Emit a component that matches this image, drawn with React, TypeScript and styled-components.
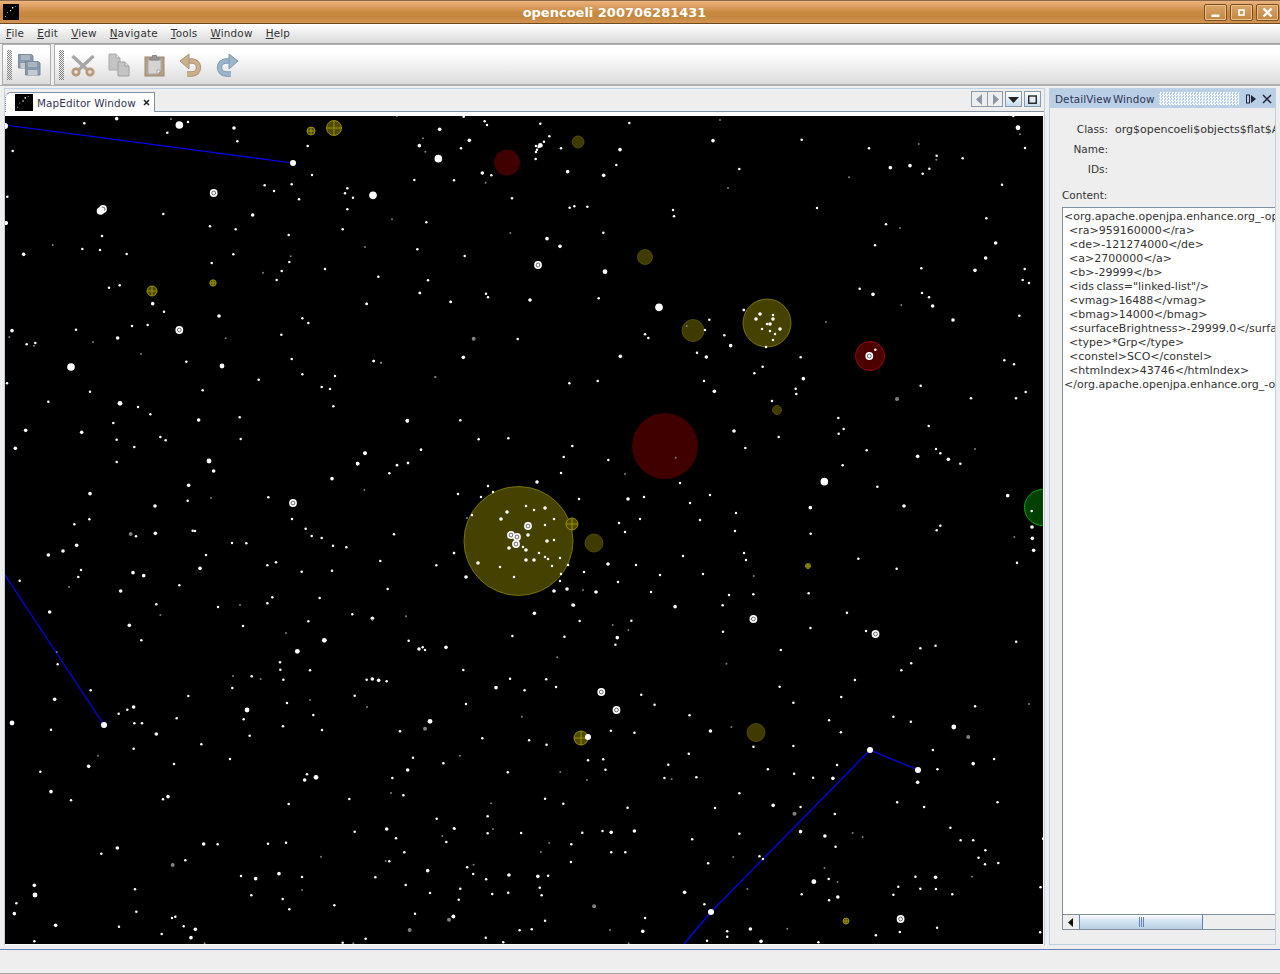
import styled, { createGlobalStyle } from "styled-components";

const GlobalStyle = createGlobalStyle`
    html, body {
        margin: 0;
        padding: 0;
        background: #eeeeee;
    }
    * {
        box-sizing: border-box;
    }
`;

const uiFont = `"DejaVu Sans", "Liberation Sans", sans-serif`;

const Root = styled.div`
    width: 1280px;
    height: 974px;
    display: flex;
    flex-direction: column;
    overflow: hidden;
    font-family: ${uiFont};
    font-size: 11px;
    color: #333333;
    background: #eeeeee;
`;

/* ---- window frame ---- */

const TitleBar = styled.header`
    height: 24px;
    flex: none;
    display: flex;
    align-items: center;
    padding: 0 1px 0 3px;
    border-top: 1px solid #8a6a48;
    border-bottom: 1px solid #6f4a1e;
    background: linear-gradient(#eab27a 0%, #dc9f62 25%, #c98a42 50%, #c4853c 70%, #d29452 100%);
`;

const TitleText = styled.div`
    flex: 1;
    padding-left: 6px;
    text-align: center;
    color: #ffffff;
    font-size: 13px;
    font-weight: bold;
`;

const WinButtons = styled.div`
    display: flex;
    gap: 3px;
`;

const WinButton = styled.div`
    width: 23px;
    height: 17px;
    display: flex;
    align-items: center;
    justify-content: center;
    border: 1px solid #7a4f22;
    border-radius: 2px;
    box-shadow: inset 0 0 0 1px #eec08e;
    background: linear-gradient(#dba66c, #c38541);
`;

const MenuBar = styled.nav`
    height: 20px;
    flex: none;
    display: flex;
    align-items: center;
    gap: 13px;
    padding: 0 0 2px 6px;
    border-bottom: 1px solid #a3a3a3;
    background: linear-gradient(#ffffff, #dadada);
`;

const MenuItem = styled.span`
    font-size: 10.4px;
    letter-spacing: 0.2px;
    u {
        text-underline-offset: 1px;
    }
`;

const ToolRow = styled.div`
    height: 42px;
    flex: none;
    display: flex;
    gap: 3px;
    padding-left: 2px;
    border-bottom: 1px solid #b0b0b0;
    background: #eeeeee;
`;

const ToolBar = styled.div<{ $grow?: boolean }>`
    display: flex;
    align-items: center;
    flex: ${(p) => (p.$grow ? 1 : "none")};
    width: ${(p) => (p.$grow ? "auto" : "49px")};
    gap: 12px;
    padding-left: 4px;
    border: 1px solid #aeaeae;
    border-right: ${(p) => (p.$grow ? "none" : "1px solid #aeaeae")};
    background: linear-gradient(#ffffff 20%, #dcdcdc);
`;

const Grip = styled.div<{ $after: number }>`
    width: 5px;
    height: 30px;
    margin-right: ${(p) => p.$after - 12}px;
    background-image: repeating-conic-gradient(#808080 0 25%, transparent 0 50%);
    background-size: 2px 2px;
`;

const ToolSlot = styled.div`
    width: 24px;
    height: 24px;
    flex: none;
    svg {
        display: block;
    }
`;

/* ---- docking area ---- */

const Workspace = styled.main`
    flex: 1;
    min-height: 0;
    display: flex;
    gap: 4px;
    padding: 2px 4px 4px 4px;
`;

const EditorFrame = styled.section`
    width: 1041px;
    flex: none;
    display: flex;
    flex-direction: column;
    border: 1px solid #bdd0e4;
    border-bottom: none;
`;

const TabStrip = styled.div`
    height: 22px;
    flex: none;
    display: flex;
    align-items: flex-end;
    justify-content: space-between;
    padding-right: 3px;
    background: #eeeeee;
`;

const Tab = styled.div`
    position: relative;
    z-index: 1;
    width: 150px;
    height: 20px;
    margin-bottom: -1px;
    display: flex;
    align-items: center;
    padding-left: 9px;
    border: 1px solid #7f8fa0;
    border-bottom: none;
    border-left: 1px dotted #7f8fa0;
    border-top-left-radius: 6px;
    background: #ffffff;
`;

const TabLabel = styled.span`
    margin-left: 4px;
    font-size: 10.4px;
    letter-spacing: 0.12px;
    white-space: nowrap;
    color: #333355;
`;

const TabClose = styled.span`
    margin-left: 7px;
    display: flex;
`;

const AppIconBox = styled.div<{ $w: number; $h: number }>`
    width: ${(p) => p.$w}px;
    height: ${(p) => p.$h}px;
    flex: none;
    background: #000000;
    svg {
        display: block;
    }
`;

const TabControls = styled.div`
    display: flex;
    gap: 2px;
    align-self: flex-start;
    margin-top: 2px;
`;

const ControlGroup = styled.div`
    display: flex;
    border: 1px solid #8c9aa8;
    background: #eeeeee;
`;

const ControlCell = styled.div<{ $raised?: boolean }>`
    width: 15px;
    height: 14px;
    display: flex;
    align-items: center;
    justify-content: center;
    background: ${(p) => (p.$raised ? "linear-gradient(#ffffff, #c9dcf0)" : "#eeeeee")};
    & + & {
        border-left: 1px solid #8c9aa8;
    }
`;

const TabBody = styled.div`
    flex: 1;
    min-height: 0;
    padding-top: 4px;
    border-top: 1px solid #7f8fa0;
    background: #ffffff;
`;

const MapSvg = styled.svg`
    display: block;
    width: 1038px;
    height: 828px;
    background: #000000;
`;

/* ---- detail panel ---- */

const DetailPanel = styled.aside`
    flex: 1;
    min-width: 0;
    display: flex;
    flex-direction: column;
    border: 1px solid #bdd0e4;
    overflow: hidden;
`;

const PanelHeader = styled.div`
    height: 19px;
    flex: none;
    display: flex;
    align-items: center;
    padding: 0 3px 0 5px;
    background: #b8cfe5;
    color: #333355;
`;

const PanelTitle = styled.span`
    flex: none;
    font-size: 10.4px;
    letter-spacing: 0.12px;
    white-space: nowrap;
    word-spacing: -2px;
`;

const Dither = styled.div`
    flex: 1;
    height: 13px;
    margin: 0 7px 0 4px;
    background-image: repeating-conic-gradient(#f4f8fc 0 25%, transparent 0 50%);
    background-size: 3px 3px;
`;

const PanelIcons = styled.div`
    display: flex;
    flex: none;
    gap: 6px;
`;

const PanelBody = styled.div`
    flex: 1;
    min-height: 0;
    display: flex;
    flex-direction: column;
    padding: 15px 0 14px 12px;
`;

const FieldGrid = styled.div`
    display: grid;
    grid-template-columns: 46px 1fr;
    column-gap: 7px;
    grid-auto-rows: 20px;
`;

const FieldLabel = styled.span`
    font-size: 10.5px;
    text-align: right;
`;

const FieldValue = styled.span`
    white-space: nowrap;
    overflow: hidden;
`;

const ContentLabel = styled.div`
    margin-top: 6px;
    height: 18px;
    font-size: 10.5px;
`;

const TextArea = styled.div`
    flex: 1;
    min-height: 0;
    display: flex;
    flex-direction: column;
    border-left: 1px solid #7f8fa0;
    border-top: 1px solid #7f8fa0;
    background: #ffffff;
`;

const TextContent = styled.pre`
    flex: 1;
    min-height: 0;
    margin: 0;
    padding: 2px 0 0 1px;
    overflow: hidden;
    font-family: ${uiFont};
    font-size: 11px;
    line-height: 14px;
    color: #333333;
    word-spacing: -1px;
`;

const HScroll = styled.div`
    height: 16px;
    flex: none;
    display: flex;
    border-top: 1px solid #7f8fa0;
    border-bottom: 1px solid #7f8fa0;
    background: #eeeeee;
`;

const ScrollArrow = styled.div`
    width: 16px;
    display: flex;
    align-items: center;
    justify-content: center;
    background: #eeeeee;
`;

const ScrollThumb = styled.div`
    width: 124px;
    display: flex;
    align-items: center;
    justify-content: center;
    gap: 1px;
    border-left: 1px solid #6382bf;
    border-right: 1px solid #6382bf;
    background: linear-gradient(#ffffff, #d6e4f2 40%, #b8cfe5);
`;

const ThumbLine = styled.i`
    width: 1px;
    height: 10px;
    background: #6382bf;
`;

const StatusBar = styled.footer`
    height: 25px;
    flex: none;
    border-top: 1px solid #6382bf;
    border-bottom: 1px solid #a8a8a8;
    background: #eeeeee;
`;

/* ---- star data, copied per map region: x,y[,kind]  d=dim D=dim blob m=mid l=large b=big ---- */

const REGIONS = [
    { ox: 0, oy: 110, sx: 3, sy: 3, pts: `350,26,m 253,40 513,27,d 538,45,b 564,36 502,68 702,54,m 712,94 923,108 38,123 936,195 794,226 875,223 822,243 1042,235 1035,250 897,268 1042,298 22,260 18,339,m 490,312 758,315,m 630,349 707,358 866,375 1028,358 306,378 158,405,d 247,417 300,420 380,432 71,433,m 700,433 872,439,d 635,459 868,456 975,477 845,483 789,488,d 830,510 327,533 359,526` },
    { ox: 5, oy: 290, sx: 3, sy: 3, pts: `443,41,m 477,65 642,78,m 381,108 428,105 213,119 21,122,m 338,144,m 13,141,d 65,163 91,159 87,167,d 264,156,d 198,231,b 408,192,d 544,215 651,228,l 662,145,d 6,280 255,305 593,301 761,269 130,335 345,340,l 399,351 436,373 325,399 581,390,m 704,382 62,421,m 230,427,m 335,449 466,441 482,451 707,447 388,471 31,475,m 335,516 612,513,l 626,543,m 551,586,m 255,611,m 548,632 618,624,d 450,648,m 253,688 208,703 377,732,D 393,739 451,730,m 563,722 570,723 681,759 724,760 215,766,m 174,783,m 130,795,m 603,795 585,835,m 228,840 220,861 192,891,d 384,848,m 416,857,m 44,872 347,903,m 523,886 134,966,m 454,943 466,975,d 639,951 705,945,d 787,940 802,922 944,924 1042,973 1102,985,m 1203,979,d 1245,9 1337,36 1085,42 892,85 910,99 829,134 860,207 892,253 990,258 950,291 975,297 985,349 1106,213 1128,218,d 1291,261,d 1207,393,m 1080,490,m 1058,521,m 1248,479 1176,526 1209,519 1153,550 981,566,m 1078,600,d 790,622 861,687 902,716 920,738 950,744 984,767 1024,772 1167,733 1126,813 1294,826 1347,789 787,826 813,817 890,845 981,842 1148,897` },
    { ox: 5, oy: 620, sx: 3, sy: 3, pts: `373,16,m 409,61 714,18 910,4 1102,0,d 843,39,d 958,61,l 877,94,l 1211,62 1242,87,m 1253,82 1260,90 1323,82,m 155,96,d 158,133 825,127 826,149 915,151 684,168,d 740,169 767,177,d 835,179 1085,179 1102,177,m 1121,181,m 1145,184 257,211 682,204 550,228 149,238,m 846,249 915,240,d 1049,227 1086,261,d 386,261,m 367,269 341,281 726,270,l 925,285 515,295 716,298 388,310 411,310 21,309,l 138,329 834,319 951,330 1185,334 1275,304,l 1260,326,D 454,342,m 734,347 589,373 386,386 279,407,d 675,417 1224,413 1315,430 507,432 251,439,m 106,455 1208,450,m 906,463 933,472,l 899,480,m 1162,474 138,515,m 1158,519,d 1195,526 198,541 489,530,m 474,538 1033,537 851,552 1295,596 1145,627,m 1049,635 1347,625 1312,648,d 1173,655 1324,666 596,672,m 638,673 789,671 843,668 337,684,m 289,701 1198,697 948,710,d 1142,723,d 1153,724 541,721 503,735,D 708,768 752,776,m 822,761,m 891,771 1111,772 1268,752,m 88,796,m 90,825,l 390,808 1202,795 891,810,d 739,826 833,837 1275,819 34,850 988,856 853,868 28,881,m 394,875 1230,881 511,890 501,894 1345,889,m 1332,899,D 152,916,m 342,920 536,919 571,928,m 1214,930,D 470,942 558,953,m 88,964 1082,956 1013,968 599,970,d 1045,970,d` },
    { ox: 350, oy: 116, sx: 3, sy: 3, pts: `341,2 141,0,d 404,16 411,27 571,23 269,40,m 219,67,d 358,73,m 208,89,m 333,97 226,107,d 265,128,b 571,88,l 582,77 598,61 558,90 566,93 561,101 558,108 557,129 633,97 397,171,m 424,178 407,200,d 312,193 193,192 653,167,m 810,101,m 799,147 761,178,m 838,21 1110,12,d 1089,74,m 1168,159 1134,216,d 9,245 69,238,b 486,247 659,275 673,271 712,272 969,282 972,301 126,310,d 229,319 481,351,d 760,350 591,368,m 630,391,m 202,400 45,393,d 344,420 765,467,l 85,482 234,493 408,533 414,544 209,531 540,552,m 746,547 50,563 302,557 927,574,b 1181,582 1078,611 1010,630,d 1065,642 885,655 895,666 1123,658 1142,689,m 371,668,D 503,669 340,724,m 811,721,m 1041,710 1069,723,m 71,735 93,740,d 256,783,d 743,795 658,802 1062,795 1093,826,m 172,914,m 331,913 1152,945,m 386,970 475,967 667,990 1186,996 213,1001 45,1011,m 641,1023 775,1032 977,1025,d 174,1041 141,1047 23,1043,m` },
    { ox: 750, oy: 116, sx: 3, sy: 3, pts: `155,71 357,97 506,84,d 560,119 559,131,d 638,127 421,155,m 480,149,m 538,158 518,173 297,184,d 756,206 810,55,d 825,96 804,35,l 790,0 201,276 709,307 408,325 450,336,d 375,388 737,381,m 707,426,m 514,457 675,463,m 824,459 818,492 837,501 329,518 369,535,m 516,531 537,544 454,567,d 548,570,m 808,599 609,612,m 228,618,d 152,724 376,701 763,733 792,745 38,752 13,772 160,788,m 137,818 139,834 512,809 441,849,D 663,847 798,847 827,828 66,855 265,906 536,930 281,939 266,953 86,963 350,1003 558,999 571,1012 503,1021,m 595,1030,m 675,999,d 631,1043 278,1048 223,1097,b 382,1112 773,1139,m 181,1175,m 462,1170,m 845,1185 846,1233,m 847,1267,m 851,1303,m 571,1229 560,1243 793,1263,d 182,1253 325,1328 801,1340 440,1358 11,1380,d 10,1435 176,1432` },
    { ox: 450, oy: 600, sx: 2.63, sy: 3, pts: `222,40,m 326,16 592,20,m 717,16 341,63 428,75,d 477,62 469,90,d 1044,38 948,84 718,95 1094,93 164,108 301,110 440,113,m 435,134 870,150 1237,145 1277,137 1489,125 282,172,d 727,191,d 1213,190 1187,211 35,210 158,236 253,238 1065,240 121,263,m 196,271 279,261 867,260 503,284 1029,291 42,312 538,314 903,308 1381,319 1523,312,d 630,346 189,350,d 997,361 1166,350 1212,365 1325,381,l 685,393,m 740,381,d 423,392 485,398 1028,397 1363,411,D 85,415 208,421 254,434 798,440 903,438 1270,450 628,461 26,467,d 363,481 403,478 409,509 574,494 1018,495 1431,477 1376,491,m 1282,508 152,517 290,516,d 360,540,d 564,534 583,537,d 648,532 836,508 905,521 955,533 1007,535,m 1230,547,m 761,580 250,596 108,610,d 298,611 467,623 697,624 850,616,m 922,621 906,641,D 1012,642 1176,607 1247,621 1440,607 99,649 12,686 113,687,d 99,700 187,699 348,698 401,693 424,697,m 485,693,m 761,701 922,695,m 986,708,m 1059,699,d 1085,711,d 1316,683 1343,721 1376,721 1560,716 637,718 261,729,d 319,733 1014,740 1408,751 239,756,d 424,757 461,757 745,771,d 814,769 823,777 1390,773 679,790 318,786 62,794,d 45,802 1407,793 1442,789 985,804,d 61,822 95,838 155,825,m 231,829,m 258,827 1224,830 1277,832,m 1373,830,d 996,837 957,845,l 1019,846,d 236,863 27,866 1179,860 1237,866 1278,867 782,867,d 111,882 153,878 241,886 617,877,m 925,883 1166,884 1321,883 1020,891,m 1553,862 23,899 997,901 669,913 379,919,D 9,950,m 513,954 250,962 183,991 215,988 421,990,d 507,994,m 729,994 790,987,m 887,986,d 1281,983 1183,996 1120,1006 1552,997 94,1013 729,1010 676,1022 818,1024,m 969,1027 140,1027 470,1030,d` },
    { ox: 0, oy: 0, sx: 1, sy: 1, pts: `537,482,m 561,473 488,486 458,494 481,497 493,492 579,499 526,506 534,510 545,508,m 507,512,m 472,515 467,518,d 501,519,m 554,519 545,525 619,523 528,535,m 547,541,m 554,540 509,548,m 523,547 526,550,m 539,553 454,553 545,557 548,559 526,560,m 534,560,m 560,558 478,563,m 500,567 552,566 568,565 608,564,m 466,577,m 514,577 584,572 561,574 560,581 618,582 554,591,m 567,589,m 583,590,d 596,592,m 573,605,m 628,499,m 644,497 690,503 625,474,d 640,519 625,532 683,556 636,565 660,575 651,592 729,595 744,553 746,560 703,574 736,513 700,520 680,483 710,495 735,531 744,310 760,314,m 756,319,m 773,315 773,319,m 770,324,m 767,324 762,329 770,331 780,329,m 775,334 773,340 766,347` },
];

const RADIUS: Record<string, number> = { n: 1.25, m: 1.8, l: 2.4, b: 3.8, d: 1, D: 2 };

const stars = REGIONS.flatMap((r) =>
    r.pts.split(" ").map((p) => {
        const [x, y, kind = "n"] = p.split(",");
        return {
            cx: r.ox + Number(x) / r.sx,
            cy: r.oy + Number(y) / r.sy,
            kind,
        };
    })
);

const RINGS = [
    [213.7, 193], [179.3, 330], [293, 503], [538, 265], [753.4, 619], [875.5, 634],
    [601.3, 692], [616.5, 710], [528, 526], [511, 535], [517, 537], [516, 544],
    [869.3, 356], [900.6, 919], [103, 209],
];

const NODES = [
    [5, 126, 3], [293, 163, 3], [104, 725, 3], [870, 750, 3], [918, 770, 3],
    [711, 912, 3], [100.5, 211, 3.8], [588, 737, 3], [6, 223, 2],
];

const LINES = [
    [[5, 125], [293, 163]],
    [[5, 575], [104, 725]],
    [[684, 944], [711, 912], [870, 750], [918, 770]],
];

const OLIVE = [
    { x: 518.5, y: 541, r: 54.5 },
    { x: 767, y: 323, r: 24 },
    { x: 693, y: 330.5, r: 11 },
    { x: 645, y: 257, r: 7.5 },
    { x: 578, y: 142, r: 6 },
    { x: 777, y: 410, r: 4.5 },
    { x: 594, y: 543, r: 9 },
    { x: 756, y: 732.5, r: 9 },
];

const CROSSED = [
    { x: 334, y: 128, r: 7.5 },
    { x: 311, y: 131, r: 4 },
    { x: 152, y: 291, r: 5 },
    { x: 213, y: 283, r: 3.2 },
    { x: 572, y: 524, r: 6 },
    { x: 581, y: 738, r: 7 },
    { x: 808, y: 566, r: 2.5 },
    { x: 846, y: 921, r: 3 },
];

const DETAIL_XML = `<org.apache.openjpa.enhance.org_-opencoeli-objects-flat-AbstractObject>
  <ra>959160000</ra>
  <de>-121274000</de>
  <a>2700000</a>
  <b>-29999</b>
  <ids class="linked-list"/>
  <vmag>16488</vmag>
  <bmag>14000</bmag>
  <surfaceBrightness>-29999.0</surfaceBrightness>
  <type>*Grp</type>
  <constel>SCO</constel>
  <htmIndex>43746</htmIndex>
</org.apache.openjpa.enhance.org_-opencoeli-objects-flat-AbstractObject>`;

const MENUS = ["File", "Edit", "View", "Navigate", "Tools", "Window", "Help"];

/* ---- drawings ---- */

function StarMap() {
    return (
        <MapSvg viewBox="5 116 1038 828">
            <circle cx={1042.5} cy={507.5} r={18} fill="#004000" stroke="#00a800" />
            <circle cx={665} cy={446} r={33} fill="#400000" />
            <circle cx={507} cy={162.5} r={13} fill="#400000" />
            <circle cx={870} cy={356} r={14.5} fill="#4c0000" stroke="#a00010" />
            {OLIVE.map((o) => (
                <circle
                    key={o.x}
                    cx={o.x}
                    cy={o.y}
                    r={o.r}
                    fill={o.r > 20 ? "#454100" : "#3f3b00"}
                    stroke={o.r > 20 ? "#8a8400" : "#5a5500"}
                    strokeWidth={0.8}
                />
            ))}
            {CROSSED.map((o) => (
                <g key={o.x} stroke="#aaa200" strokeWidth={0.8}>
                    <circle cx={o.x} cy={o.y} r={o.r} fill="#504b00" />
                    <path d={`M${o.x - o.r} ${o.y}H${o.x + o.r}M${o.x} ${o.y - o.r}V${o.y + o.r}`} />
                </g>
            ))}
            {LINES.map((l) => (
                <polyline
                    key={l[0][0] + l[0][1]}
                    points={l.map((p) => p.join(",")).join(" ")}
                    fill="none"
                    stroke="#0000ff"
                    strokeWidth={1.2}
                />
            ))}
            {stars.map((s, i) => (
                <circle
                    key={i}
                    cx={s.cx}
                    cy={s.cy}
                    r={RADIUS[s.kind]}
                    fill={s.kind === "d" || s.kind === "D" ? "#808080" : "#ffffff"}
                />
            ))}
            {RINGS.map((n) => (
                <g key={n[0] + n[1]}>
                    <circle cx={n[0]} cy={n[1]} r={3.9} fill="#ffffff" />
                    <circle cx={n[0]} cy={n[1]} r={1.9} fill="none" stroke="#444444" strokeWidth={0.8} />
                </g>
            ))}
            {NODES.map((n) => (
                <circle key={n[0] + n[1]} cx={n[0]} cy={n[1]} r={n[2]} fill="#ffffff" />
            ))}
        </MapSvg>
    );
}

function AppIcon({ size }: { size: number }) {
    return (
        <svg width={size} height={size} viewBox="0 0 16 16">
            <g fill="#ffffff">
                <rect x="9" y="3" width="1.4" height="1.4" />
                <rect x="7" y="6" width="1.2" height="1.2" />
                <rect x="4" y="8" width="1" height="1" fill="#999" />
                <rect x="2" y="12" width="1" height="1" fill="#aaa" />
                <rect x="12" y="2" width="1" height="1" fill="#888" />
            </g>
        </svg>
    );
}

function SaveAllIcon() {
    return (
        <svg width="24" height="24" viewBox="0 0 24 24">
            <path d="M1.5 1.5h13l1.5 1.5v12H1.5z" fill="#8799ab" stroke="#78899a" />
            <rect x="4" y="2" width="9" height="5" fill="#a9b6c2" />
            <rect x="3.5" y="10" width="10" height="5" fill="#c4cad0" />
            <path d="M8.5 8.5h13l1.5 1.5v12H8.5z" fill="#8799ab" stroke="#78899a" />
            <rect x="11" y="9" width="9" height="5" fill="#a9b6c2" />
            <rect x="11" y="17" width="9.5" height="5" fill="#c4cad0" />
        </svg>
    );
}

function CutIcon() {
    return (
        <svg width="24" height="24" viewBox="0 0 24 24" fill="none">
            <path d="M1.5 3l15 14M22.5 3l-15 14" stroke="#a6a6a6" strokeWidth="3.4" />
            <circle cx="5" cy="19" r="3.2" stroke="#b89a78" strokeWidth="2.8" />
            <circle cx="19" cy="19" r="3.2" stroke="#b89a78" strokeWidth="2.8" />
        </svg>
    );
}

function CopyIcon() {
    return (
        <svg width="24" height="24" viewBox="0 0 24 24">
            <path d="M2 1h7l4 4v12H2z" fill="#c4c4c4" stroke="#aaaaaa" />
            <path d="M9 1v4h4" fill="#e0e0e0" stroke="#aaaaaa" />
            <path d="M11 9h7l4 4v10H11z" fill="#c4c4c4" stroke="#a0a0a0" />
            <path d="M18 9v4h4" fill="#e0e0e0" stroke="#a0a0a0" />
        </svg>
    );
}

function PasteIcon() {
    return (
        <svg width="24" height="24" viewBox="0 0 24 24">
            <rect x="2" y="4" width="19" height="19" fill="#b49f82" stroke="#9c8a70" />
            <path d="M5 7h13v10l-4 4H5z" fill="#d4d4d4" stroke="#aaaaaa" />
            <path d="M14 21v-4h4" fill="#eeeeee" stroke="#aaaaaa" />
            <path d="M7 7V5h2.5V2.5h4V5H16v2z" fill="#9a9a9a" stroke="#868686" />
        </svg>
    );
}

function UndoIcon() {
    return (
        <svg width="24" height="24" viewBox="0 0 24 24" fill="none">
            <path d="M7 8h6a6.5 6.5 0 0 1 0 13H8" stroke="#a89478" strokeWidth="5.4" />
            <path d="M7 8h6a6.5 6.5 0 0 1 0 13H8" stroke="#ccb088" strokeWidth="3.6" />
            <path d="M10 1v15L1 8z" fill="#ccb088" stroke="#a89478" />
        </svg>
    );
}

function RedoIcon() {
    return (
        <svg width="24" height="24" viewBox="0 0 24 24" fill="none">
            <path d="M17 8h-6a6.5 6.5 0 0 0 0 13h5" stroke="#7f99b0" strokeWidth="5.4" />
            <path d="M17 8h-6a6.5 6.5 0 0 0 0 13h5" stroke="#9ab5cc" strokeWidth="3.6" />
            <path d="M14 1v15l9-8z" fill="#9ab5cc" stroke="#7f99b0" />
        </svg>
    );
}

const TOOLS = [CutIcon, CopyIcon, PasteIcon, UndoIcon, RedoIcon];

function App() {
    return (
        <Root>
            <GlobalStyle />
            <TitleBar>
                <AppIconBox $w={16} $h={16}>
                    <AppIcon size={16} />
                </AppIconBox>
                <TitleText>opencoeli 200706281431</TitleText>
                <WinButtons>
                    <WinButton>
                        <svg width="11" height="11" viewBox="0 0 11 11">
                            <rect x="1.5" y="7.5" width="8" height="2.5" fill="#ffffff" />
                        </svg>
                    </WinButton>
                    <WinButton>
                        <svg width="11" height="11" viewBox="0 0 11 11">
                            <rect x="3" y="3" width="5" height="5" fill="none" stroke="#ffffff" strokeWidth="1.6" />
                        </svg>
                    </WinButton>
                    <WinButton>
                        <svg width="11" height="11" viewBox="0 0 11 11">
                            <path d="M1.5 1.5l8 8M9.5 1.5l-8 8" stroke="#ffffff" strokeWidth="2.4" />
                        </svg>
                    </WinButton>
                </WinButtons>
            </TitleBar>

            <MenuBar>
                {MENUS.map((m) => (
                    <MenuItem key={m}>
                        <u>{m[0]}</u>
                        {m.slice(1)}
                    </MenuItem>
                ))}
            </MenuBar>

            <ToolRow>
                <ToolBar>
                    <Grip $after={5} />
                    <ToolSlot>
                        <SaveAllIcon />
                    </ToolSlot>
                </ToolBar>
                <ToolBar $grow>
                    <Grip $after={7} />
                    {TOOLS.map((Icon, i) => (
                        <ToolSlot key={i}>
                            <Icon />
                        </ToolSlot>
                    ))}
                </ToolBar>
            </ToolRow>

            <Workspace>
                <EditorFrame>
                    <TabStrip>
                        <Tab>
                            <AppIconBox $w={18} $h={17}>
                                <AppIcon size={17} />
                            </AppIconBox>
                            <TabLabel>MapEditor Window</TabLabel>
                            <TabClose>
                                <svg width="7" height="7" viewBox="0 0 7 7">
                                    <path d="M1 1l5 5M6 1L1 6" stroke="#222222" strokeWidth="1.6" />
                                </svg>
                            </TabClose>
                        </Tab>
                        <TabControls>
                            <ControlGroup>
                                <ControlCell>
                                    <svg width="9" height="11" viewBox="0 0 9 11">
                                        <path d="M7 0v11L1 5.5z" fill="#8a98a8" />
                                    </svg>
                                </ControlCell>
                                <ControlCell>
                                    <svg width="9" height="11" viewBox="0 0 9 11">
                                        <path d="M2 0v11l6-5.5z" fill="#8a98a8" />
                                    </svg>
                                </ControlCell>
                            </ControlGroup>
                            <ControlGroup>
                                <ControlCell $raised>
                                    <svg width="11" height="7" viewBox="0 0 11 7">
                                        <path d="M0 1h11L5.5 7z" fill="#222222" />
                                    </svg>
                                </ControlCell>
                            </ControlGroup>
                            <ControlGroup>
                                <ControlCell $raised>
                                    <svg width="9" height="9" viewBox="0 0 9 9">
                                        <rect x="0.75" y="1" width="7.5" height="7.25" fill="none" stroke="#222222" strokeWidth="1.4" />
                                    </svg>
                                </ControlCell>
                            </ControlGroup>
                        </TabControls>
                    </TabStrip>
                    <TabBody>
                        <StarMap />
                    </TabBody>
                </EditorFrame>

                <DetailPanel>
                    <PanelHeader>
                        <PanelTitle>DetailView Window</PanelTitle>
                        <Dither />
                        <PanelIcons>
                            <svg width="10" height="10" viewBox="0 0 10 10">
                                <rect x="0.5" y="1" width="3" height="8" fill="none" stroke="#222233" />
                                <path d="M5 1v8l5-4z" fill="#222233" />
                            </svg>
                            <svg width="10" height="10" viewBox="0 0 10 10">
                                <path d="M1 1l8 8M9 1L1 9" stroke="#222233" strokeWidth="1.5" />
                            </svg>
                        </PanelIcons>
                    </PanelHeader>
                    <PanelBody>
                        <FieldGrid>
                            <FieldLabel>Class:</FieldLabel>
                            <FieldValue>org$opencoeli$objects$flat$AbstractObject</FieldValue>
                            <FieldLabel>Name:</FieldLabel>
                            <FieldValue />
                            <FieldLabel>IDs:</FieldLabel>
                            <FieldValue />
                        </FieldGrid>
                        <ContentLabel>Content:</ContentLabel>
                        <TextArea>
                            <TextContent>{DETAIL_XML}</TextContent>
                            <HScroll>
                                <ScrollArrow>
                                    <svg width="6" height="9" viewBox="0 0 6 9">
                                        <path d="M5 0v9L0 4.5z" fill="#111111" />
                                    </svg>
                                </ScrollArrow>
                                <ScrollThumb>
                                    <ThumbLine />
                                    <ThumbLine />
                                    <ThumbLine />
                                </ScrollThumb>
                            </HScroll>
                        </TextArea>
                    </PanelBody>
                </DetailPanel>
            </Workspace>

            <StatusBar />
        </Root>
    );
}

export default App;
